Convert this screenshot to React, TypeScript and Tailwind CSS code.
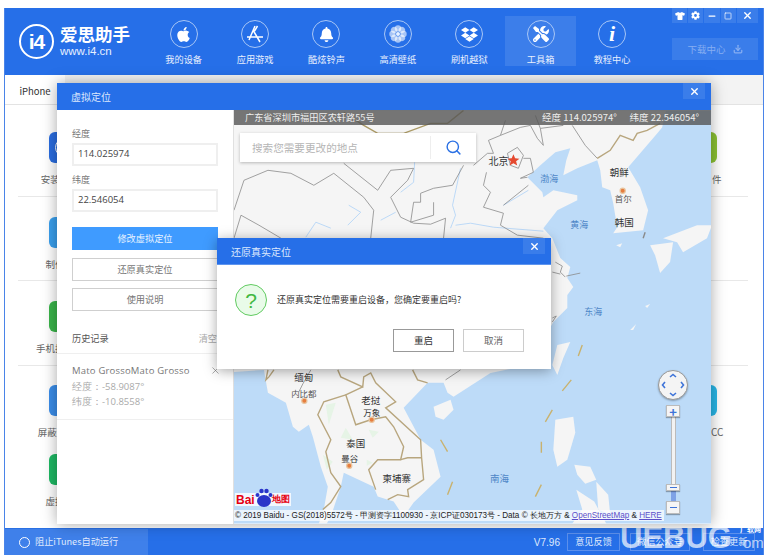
import React from "react";
import { Download, Minus, Search, Square, X } from "lucide-react";
import { FaApple, FaBell, FaCog, FaDropbox, FaTools, FaTshirt } from "react-icons/fa";

const navItems = ["我的设备", "应用游戏", "酷炫铃声", "高清壁纸", "刷机越狱", "工具箱", "教程中心"];

const petals = [0, 45, 90, 135, 180, 225, 270, 315];

const NavIcon: React.FC<{ index: number }> = ({ index }) => {
    if (index === 0) return <FaApple size={17} color="white" />;
    if (index === 1)
        return (
            <svg width="20" height="20" viewBox="0 0 20 20" fill="none" stroke="white" strokeWidth="1.5">
                <path d="M10 2 L4 16 M8 6 L15 18 M2 13 H18 M12.5 2 L9.5 7" />
            </svg>
        );
    if (index === 2) return <FaBell size={15} color="white" />;
    if (index === 3)
        return (
            <svg width="22" height="22" viewBox="0 0 22 22" fill="white">
                {petals.map((a) => (
                    <circle key={a} cx="11" cy="5.5" r="3.2" opacity="0.6" transform={`rotate(${a} 11 11)`} />
                ))}
                <circle cx="11" cy="11" r="2" fill="#eaf2ff" />
            </svg>
        );
    if (index === 4) return <FaDropbox size={17} color="white" />;
    if (index === 5) return <FaTools size={16} color="white" />;
    return <span className="font-['Liberation_Serif',serif] text-[22px] font-bold italic leading-none text-white">i</span>;
};

const SideIcon: React.FC<{ color: string; label: string; ring?: boolean }> = ({ color, label, ring }) => (
    <div className="flex w-[31px] flex-col items-center">
        <div className={`flex h-[31px] w-[31px] items-center justify-center rounded-[6px] ${color}`}>
            {ring && <div className="h-[19px] w-[19px] rounded-full border border-white" />}
        </div>
        <span className="mt-[10px] whitespace-nowrap text-[9.5px] leading-[12px] text-[#666]">{label}</span>
    </div>
);

const MapCanvas: React.FC = () => (
    <svg className="block h-full w-full" viewBox="233 110 478 414" fontFamily="'Noto Sans CJK SC', sans-serif">
        <rect x="233" y="110" width="478" height="414" fill="#bddbf8" />
        {/* land */}
        <g fill="#f5f5f5">
            <path d="M233 110 H666 L662 127 L657 133 L628 167 L640 187 L648 210 L643 230 L613 233 L617 227 L613 203 L610 190 L602 187 L600 170 L597 160 L577 168 L563 175 L566 160 L570 148 L555 152 L540 165 L527 177 L535 185 L542 192 L543 197 L553 190 L577 195 L577 200 L557 210 L543 228 L552 238 L560 258 L570 267 L567 278 L573 287 L567 295 L567 308 L553 322 L540 345 L515 368 L490 373 L453 397 L447 393 L443 383 L427 383 L403 408 L420 440 L433 450 L440 477 L413 503 L403 517 L393 502 L377 497 L373 487 L343 473 L340 487 L330 517 L326 524 H318 L323 510 L327 487 L320 467 L312 437 L308 425 L298 432 L292 427 L285 403 L267 393 L263 370 L233 372 Z" />
            <path d="M433 407 L450 400 L453 410 L443 420 L435 417 Z" />
            <path d="M570 342 L557 345 L552 365 L557 375 L563 358 Z" />
            <path d="M650 245 L673 242 L670 262 L660 273 L655 255 Z" />
            <path d="M663 238 L697 225 L712 225 L707 238 L683 252 L677 242 Z" />
            <path d="M616 245 L622 243 L620 247 Z" />
            <path d="M645 306 L650 304 L647 308 Z M630 330 L636 324 L633 330 Z" />
            <path d="M555 420 L573 417 L575 433 L567 460 L557 467 L553 450 Z" />
            <path d="M574 465 L590 467 L596 480 L585 484 L577 475 Z" />
            <path d="M596 482 L608 495 L610 515 L598 510 Z" />
            <path d="M576 490 L594 502 L606 524 H572 L582 510 Z" />
        </g>
        {/* thai forest tints */}
        <g fill="#e6f4e6">
            <path d="M325 405 L335 403 L328 425 Z M345 428 L352 440 L340 438 Z M322 455 L332 462 L326 470 Z M368 430 L378 432 L372 438 Z M366 460 L372 463 L366 466 Z" />
        </g>
        {/* rivers */}
        <g fill="none" stroke="#b5d6f7" strokeWidth="0.9">
            <path d="M414 162 L413 182 L400 192 M460 168 L452 205 L455 215 L450 228 M455 225 L470 223 L493 227 L543 231 M503 205 L528 190" />
            <path d="M347 225 L360 212 L348 205 M380 220 L395 212 M305 237 L315 222 L330 228" />
        </g>
        {/* province lines */}
        <g fill="none" stroke="#8a8a8a" strokeWidth="0.8">
            <path d="M233 210 L243 180 L267 170 L290 173 L313 185 L333 173 L363 197 L373 210 L370 238" />
            <path d="M343 163 L377 190 L390 170 L413 168 L407 180 L390 197 L400 217 L413 223 L430 224 L445 218 L443 238" />
            <path d="M463 165 L452 185 L433 188 L420 193 L420 202 L413 202 L410 222 L433 215 L433 202" />
            <path d="M473 165 L487 153 L493 153 L488 140 L500 135 L520 127 L530 125 L537 138 L543 145 L540 128 L563 125" />
            <path d="M507 153 L517 147 L523 155 L518 168 L510 165 Z" />
            <path d="M523 158 L530 158 L533 172 L520 178 L527 177" />
            <path d="M486 172 L483 185 L490 192 L483 207 L503 213 L500 225 L517 235 L543 238" />
            <path d="M503 205 L528 185" />
            <path d="M597 158 L585 145 L572 125 M540 128 L535 115 M500 135 L505 120" />
            <path d="M233 238 L240 215 L258 225 L280 238" />
            <path d="M555 262 L562 266 L560 272 L565 277 M552 272 L560 274 M566 276 L580 273" />
            <path d="M552 318 L556 316 L552 322" />
            <path d="M310 370 L302 384 L298 392 M445 380 L460 370" />
            <path d="M645 232 L643 238" strokeWidth="1.4" />
        </g>
        <path d="M463 110 L447 123 L430 123 L403 133 L377 133 L363 125 L343 112" fill="none" stroke="#ab9a66" strokeWidth="1.4" />
        {/* national borders */}
        <g fill="none" stroke="#b8a67e" strokeWidth="1.4">
            <path d="M597 158 L610 150 L620 135 L633 140 L637 133 L647 130 L660 123" />
            <path d="M267 370 L265 380 L268 377 L273 370" />
            <path d="M345 395 L323 402 L317 415 L330 440 L325 452 L330 473 L340 487 L330 503 L322 510" />
            <path d="M337 370 L340 377 L362 387 L363 377 L370 373 L375 383 L395 402 L385 408 L420 440 L421 458 L423 480 L407 490 L408 497 L397 495 L387 500" />
            <path d="M362 387 L345 395 L355 425 L370 420 L385 417 L393 427 L403 447 L400 460 L377 460 L368 470 L375 490" />
            <path d="M400 460 L407 458 L421 458" />
            <path d="M412 370 L417 380 L427 383" />
        </g>
        {/* nine dash line */}
        <g fill="none" stroke="#c9b26e" strokeWidth="1.4">
            <path d="M440 440 L447 452 M452 482 L447 495 M571 380 L562 391 M552 410 L545 422 M541 442 V453 M541 485 L535 497 M582 345 L578 356" />
        </g>
        {/* labels */}
        <g textAnchor="middle" fontSize="9.5" fill="#333">
            <text x="498" y="165" fontSize="10">北京</text>
            <text x="619" y="176">朝鲜</text>
            <text x="623" y="202" fontSize="8.5" fill="#555">首尔</text>
            <text x="624" y="226">韩国</text>
            <text x="549" y="182" fontSize="9" fill="#4e86c7">渤海</text>
            <text x="579" y="228" fontSize="9" fill="#4e86c7">黄海</text>
            <text x="593" y="315" fontSize="9" fill="#4e86c7">东海</text>
            <text x="303" y="381">缅甸</text>
            <text x="303" y="397" fontSize="8.5" fill="#555">内比都</text>
            <text x="370" y="404">老挝</text>
            <text x="371" y="416" fontSize="8.5">万象</text>
            <text x="355" y="447">泰国</text>
            <text x="349" y="462" fontSize="8.5">曼谷</text>
            <text x="396" y="482">柬埔寨</text>
            <text x="499" y="482" fill="#4e86c7">南海</text>
        </g>
        <path d="M513 154 L514.7 158 L519 158.3 L515.7 161 L516.8 165.2 L513 163 L509.2 165.2 L510.3 161 L507 158.3 L511.3 158 Z" fill="#e5492f" />
        <g fill="#e67e3f" stroke="#e9c6a0" strokeWidth="1.2">
            <circle cx="622.5" cy="190.5" r="2.6" />
            <circle cx="303.5" cy="401" r="2.6" />
            <circle cx="371" cy="420" r="2.6" />
            <circle cx="348.5" cy="466" r="2.6" />
        </g>
    </svg>
);

const App: React.FC = () => {
    return (
        <div className="relative h-[558px] w-[768px] overflow-hidden bg-white pb-[3px] pl-[4px] pr-[4px] pt-[8px] font-['Noto_Sans_CJK_SC','Noto_Sans',sans-serif]">
            <div className="flex h-full w-full flex-col border-x border-[#4a84e8]">
                {/* top bar */}
                <header className="flex h-[67px] shrink-0 bg-[#266fe8]">
                    <div className="flex w-[143px] shrink-0 items-center pb-[1px] pl-[14px]">
                        <div className="flex h-[35px] w-[35px] items-center justify-center rounded-full border-2 border-white">
                            <span className="font-['Liberation_Sans',sans-serif] text-[21px] font-bold leading-none tracking-[-1px] text-white">i4</span>
                        </div>
                        <div className="ml-[6px] flex flex-col">
                            <span className="text-[17.5px] font-bold leading-[20px] text-white">爱思助手</span>
                            <span className="font-['Liberation_Sans',sans-serif] text-[11.5px] leading-[14px] text-[#e6efff]">www.i4.cn</span>
                        </div>
                    </div>
                    <nav className="flex">
                        {navItems.map((item, i) => (
                            <div
                                key={item}
                                className={`mt-[8px] flex h-[50px] w-[71.4px] flex-col items-center pt-[4px] ${i === 5 ? "bg-[#3c7eea]" : ""}`}
                            >
                                <div className="flex h-[28px] w-[28px] items-center justify-center rounded-full border border-[#a9c7f6] text-white">
                                    <NavIcon index={i} />
                                </div>
                                <span className="mt-[4px] whitespace-nowrap text-[9.2px] leading-[14px] text-[#e8f0fe]">{item}</span>
                            </div>
                        ))}
                    </nav>
                    <div className="ml-auto mr-[5px] flex w-[86px] flex-col">
                        <div className="flex h-[15px] gap-[1px] text-white">
                            <div className="flex flex-1 items-center justify-center bg-[#3a7dea]"><FaTshirt size={10} /></div>
                            <div className="flex flex-1 items-center justify-center bg-[#3a7dea]"><FaCog size={9} /></div>
                            <div className="flex flex-1 items-center justify-center bg-[#3a7dea]"><Minus size={10} strokeWidth={3} /></div>
                            <div className="flex flex-1 items-center justify-center bg-[#3a7dea]"><Square size={8} strokeWidth={2} /></div>
                            <div className="flex flex-[1.4] items-center justify-center bg-[#3a7dea]"><X size={11} strokeWidth={3} /></div>
                        </div>
                        <div className="mt-[15px] flex h-[22px] items-center justify-center gap-[7px] bg-[#3a7dea] text-[9.5px] text-[#86aef2]">
                            下载中心
                            <Download size={10} strokeWidth={3} />
                        </div>
                    </div>
                </header>

                {/* page behind the dialogs */}
                <main className="flex min-h-0 flex-1 flex-col bg-white">
                    <div className="flex h-[30px] shrink-0 border-b border-[#e3e3e3] bg-[#f3f3f3]">
                        <div className="flex w-[60px] items-center justify-center bg-white pt-[3px] text-[9.5px] text-[#333]">iPhone</div>
                    </div>
                    <div className="flex flex-1 justify-between pl-[13px] pr-[15px]">
                        <div className="w-[75px]">
                            <div className="h-[92px] border-b border-[#e8e8e8] pl-[31px] pt-[27px]">
                                <SideIcon color="bg-[#2a6de0]" label="安装移动端" ring />
                            </div>
                            <div className="h-[84px] border-b border-[#e8e8e8] pl-[31px] pt-[20px]">
                                <SideIcon color="bg-[#3aa0ee]" label="制作铃声" />
                            </div>
                            <div className="h-[85px] border-b border-[#e8e8e8] pl-[31px] pt-[20px]">
                                <SideIcon color="bg-[#3ab54a]" label="手机投屏直播" />
                            </div>
                            <div className="h-[69px] pl-[31px] pt-[19px]">
                                <SideIcon color="bg-[#3b8eea]" label="屏蔽iOS更新" />
                            </div>
                            <div className="pl-[31px] pt-[19px]">
                                <SideIcon color="bg-[#1eb964]" label="虚拟定位" />
                            </div>
                        </div>
                        <div className="w-[37px]">
                            <div className="h-[92px] border-b border-[#e8e8e8] pt-[27px]">
                                <div className="h-[31px] w-[6px] rounded-r-[6px] bg-[#8bc234]" />
                                <div className="ml-[1px] mt-[10px] text-[9.5px] leading-[12px] text-[#666]">件</div>
                            </div>
                            <div className="h-[84px] border-b border-[#e8e8e8]" />
                            <div className="h-[85px] border-b border-[#e8e8e8]" />
                            <div className="pt-[19px]">
                                <div className="h-[31px] w-[6px] rounded-r-[6px] bg-[#28b7e8]" />
                                <div className="mt-[10px] text-[10px] leading-[12px] text-[#666]">CC</div>
                            </div>
                        </div>
                    </div>
                </main>

                {/* status bar */}
                <footer className="mt-[3px] flex h-[27px] shrink-0 items-center border-t border-[#2a70e4] bg-[#266fe8] text-[9.2px] text-[#dfe9fd]">
                    <div className="flex h-full w-[143px] items-center bg-[#3f80ea] pl-[14px]">
                        <span className="mr-[5px] h-[11px] w-[11px] rounded-full border border-white" />
                        <span>阻止iTunes自动运行</span>
                    </div>
                    <div className="ml-auto flex items-center pr-[8px]">
                        <span className="mr-[7px] font-['Liberation_Sans',sans-serif] text-[10px]">V7.96</span>
                        <span className="flex h-[18px] w-[53px] items-center justify-center border border-[#5c90ec]">意见反馈</span>
                        <span className="ml-[10px] flex h-[18px] w-[60px] items-center justify-center border border-[#5c90ec]">微信公众号</span>
                        <span className="ml-[13px] flex h-[18px] w-[52px] items-center justify-center border border-[#5c90ec]">检查更新</span>
                    </div>
                </footer>
            </div>

            {/* watermark */}
            <div className="absolute left-[620px] top-[521px] font-['Liberation_Sans',sans-serif] text-[31px] font-bold leading-[34px] text-white/70">UEBUG</div>
            <div className="absolute left-[743px] top-[535px] font-['Liberation_Sans',sans-serif] text-[15px] leading-[15px] text-white/70">om</div>
            <div className="absolute left-[740px] top-[526px] text-[7px] font-bold leading-[7px] text-white">广软网</div>

            {/* virtual location dialog */}
            <div className="absolute left-[57px] top-[83px] flex h-[441px] w-[654px] flex-col shadow-[0_0_14px_rgba(0,0,0,0.35)]">
                <div className="flex h-[27px] shrink-0 items-start justify-between bg-[#266fe8]">
                    <span className="pl-[14px] pt-[7px] text-[10px] leading-[14px] text-[#dce8fd]">虚拟定位</span>
                    <div className="mr-[6px] flex h-[16px] w-[22px] items-center justify-center bg-[#3a7dea] text-white">
                        <X size={11} strokeWidth={3} />
                    </div>
                </div>
                <div className="flex min-h-0 flex-1">
                    <aside className="flex w-[176px] shrink-0 flex-col bg-white">
                        <div className="px-[15px] pt-[17px]">
                            <div className="text-[9px] leading-[13px] text-[#777]">经度</div>
                            <div className="mt-[3px] flex h-[23px] items-center border-2 border-[#efefef] pl-[4px] font-['Open_Sans',sans-serif] text-[9.5px] text-[#444]">114.025974</div>
                            <div className="mt-[7px] text-[9px] leading-[13px] text-[#777]">纬度</div>
                            <div className="mt-[3px] flex h-[23px] items-center border-2 border-[#efefef] pl-[4px] font-['Open_Sans',sans-serif] text-[9.5px] text-[#444]">22.546054</div>
                            <div className="mt-[15px] flex h-[23px] items-center justify-center bg-[#3f9bff] text-[9.2px] text-[#e8f3ff]">修改虚拟定位</div>
                            <div className="mt-[8px] flex h-[23px] items-center justify-center border border-[#cfcfcf] text-[9.2px] text-[#777]">还原真实定位</div>
                            <div className="mt-[7px] flex h-[23px] items-center justify-center border border-[#cfcfcf] text-[9.2px] text-[#777]">使用说明</div>
                        </div>
                        <div className="mt-[21px] flex h-[22px] items-center justify-between border-b border-[#efefef] pb-[7px] pl-[15px] pr-[16px]">
                            <span className="text-[9.2px] text-[#555]">历史记录</span>
                            <span className="text-[9.2px] text-[#aaa]">清空</span>
                        </div>
                        <div className="relative h-[66px] border-b border-[#efefef] pl-[15px] pt-[9px] font-['Open_Sans',sans-serif] text-[9.5px] leading-[15px]">
                            <div className="mb-[1px] tracking-[0.2px] text-[#777]">Mato GrossoMato Grosso</div>
                            <div className="text-[#aaa]">经度：-58.9087°</div>
                            <div className="text-[#aaa]">纬度：-10.8558°</div>
                            <X size={11} strokeWidth={1.2} className="absolute right-[12px] top-[11px] text-[#666]" />
                        </div>
                    </aside>
                    <section className="relative min-w-0 flex-1 overflow-hidden border-l border-[#e0e0e0]">
                        <MapCanvas />
                        <div className="absolute inset-x-0 top-0 flex h-[15px] items-center justify-between bg-[#555]/80 pl-[11px] pr-[12px] text-[9.2px] leading-none text-[#eee]">
                            <span>广东省深圳市福田区农轩路55号</span>
                            <span className="text-[9.5px]">经度 114.025974°&nbsp;&nbsp;&nbsp;&nbsp;&nbsp;&nbsp;纬度 22.546054°</span>
                        </div>
                        <div className="absolute left-[6px] top-[23px] flex h-[29px] w-[236px] items-center bg-white shadow-[0_1px_3px_rgba(0,0,0,0.25)]">
                            <span className="flex-1 pl-[12px] text-[10.6px] text-[#b5b5b5]">搜索您需要更改的地点</span>
                            <span className="flex h-[23px] w-[46px] items-center justify-center border-l border-[#eee] text-[#2a70e4]">
                                <Search size={17} strokeWidth={2} />
                            </span>
                        </div>
                        {/* map nav control */}
                        <div className="absolute left-[424px] top-[260px] flex h-[30px] w-[30px] items-center justify-center rounded-full border border-[#999] bg-[#f4f4f4] shadow-[0_1px_2px_rgba(0,0,0,0.3)]">
                            <svg width="26" height="26" viewBox="0 0 26 26" fill="none" stroke="#3f74d8" strokeWidth="1.6">
                                <path d="M10 5 L13 2.5 L16 5 M10 21 L13 23.5 L16 21 M5 10 L2.5 13 L5 16 M21 10 L23.5 13 L21 16" />
                            </svg>
                        </div>
                        <div className="absolute left-[432px] top-[295px] flex w-[14px] flex-col items-center">
                            <div className="z-10 flex h-[12px] w-[14px] items-center justify-center border border-[#bbb] bg-[#f5f5f5] text-[13px] font-bold leading-none text-[#3f74d8] shadow-[0_1px_1px_rgba(0,0,0,0.3)]">+</div>
                            <div className="h-[67px] w-[5px] border-x border-[#bbb] bg-[#f2f2f2]" />
                            <div className="z-10 flex h-[7px] w-[14px] items-center justify-center border border-[#bbb] bg-[#f5f5f5] shadow-[0_1px_1px_rgba(0,0,0,0.3)]">
                                <div className="h-[1px] w-[7px] bg-[#3f74d8]" />
                            </div>
                            <div className="h-[10px] w-[5px] bg-[#7fa2e6]" />
                            <div className="z-10 flex h-[13px] w-[14px] items-center justify-center border border-[#bbb] bg-[#f5f5f5] shadow-[0_1px_1px_rgba(0,0,0,0.3)]">
                                <div className="h-[1.5px] w-[7px] bg-[#3f74d8]" />
                            </div>
                        </div>
                        {/* baidu logo */}
                        <div className="absolute bottom-[18px] left-[1px] flex h-[13px] items-center gap-[17px] bg-white/80 px-[1px] font-['Liberation_Sans',sans-serif] text-[12px] font-bold leading-none text-[#e60012]">
                            <span>Bai</span>
                            <span className="text-[8.5px]">地图</span>
                        </div>
                        <svg className="absolute bottom-[16px] left-[21px]" width="18" height="20" viewBox="0 0 18 20" fill="#2a35c9">
                            <ellipse cx="9" cy="13" rx="7" ry="6" />
                            <circle cx="2.5" cy="7" r="2" />
                            <circle cx="6.5" cy="3" r="2.2" />
                            <circle cx="11.5" cy="3" r="2.2" />
                            <circle cx="15.5" cy="7" r="2" />
                        </svg>
                        <div className="absolute bottom-[3px] left-0 whitespace-nowrap bg-white/70 pl-[1px] pr-[2px] font-['Liberation_Sans',sans-serif] text-[8.15px] leading-[11px] text-[#222]">
                            © 2019 Baidu - GS(2018)5572号 - 甲测资字1100930 - 京ICP证030173号 - Data © 长地万方 &amp; <span className="text-[#5b50c9] underline">OpenStreetMap</span> &amp; <span className="text-[#5b50c9] underline">HERE</span>
                        </div>
                    </section>
                </div>
            </div>

            {/* confirm dialog */}
            <div className="absolute left-[217px] top-[238px] flex h-[131px] w-[334px] flex-col bg-white shadow-[0_2px_12px_rgba(0,0,0,0.35)]">
                <div className="flex h-[27px] shrink-0 items-start justify-between border-b border-[#5f95ee] bg-[#266fe8]">
                    <span className="pl-[14px] pt-[7px] text-[10px] leading-[14px] text-[#dce8fd]">还原真实定位</span>
                    <div className="mr-[6px] flex h-[16px] w-[22px] items-center justify-center bg-[#3a7dea] text-white">
                        <X size={11} strokeWidth={3} />
                    </div>
                </div>
                <div className="flex items-center pl-[18px] pt-[19px]">
                    <div className="flex h-[32px] w-[32px] items-center justify-center rounded-full border border-[#62cb62] bg-[#e9fbe9] font-['Liberation_Sans',sans-serif] text-[21px] leading-none text-[#42b842]">?</div>
                    <span className="ml-[10px] text-[9px] text-[#333]">还原真实定位需要重启设备，您确定要重启吗?</span>
                </div>
                <div className="mt-[13px] flex justify-end gap-[9px] pr-[27px] text-[9.5px]">
                    <div className="flex h-[23px] w-[61px] items-center justify-center border border-[#999] text-[#333]">重启</div>
                    <div className="flex h-[23px] w-[61px] items-center justify-center border border-[#ccc] text-[#666]">取消</div>
                </div>
            </div>
        </div>
    );
};

export default App;
